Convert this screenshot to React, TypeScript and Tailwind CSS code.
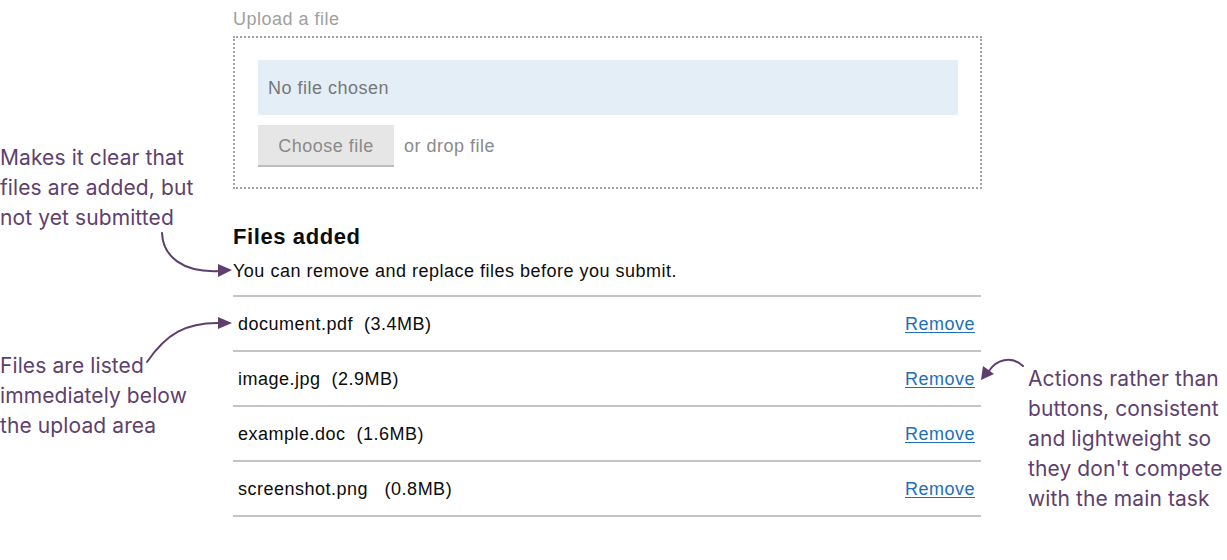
import React from "react";

const files = [
  { name: "document.pdf", size: "(3.4MB)", gap: "  " },
  { name: "image.jpg", size: "(2.9MB)", gap: "  " },
  { name: "example.doc", size: "(1.6MB)", gap: "  " },
  { name: "screenshot.png", size: "(0.8MB)", gap: "   " },
];

export default function App() {
  return (
    <div className="relative w-[1227px] h-[560px] bg-white overflow-hidden flex">
      <div className="w-[233px] shrink-0 text-[#5e3f6e] text-[21px] leading-[30px] tracking-[0.1px] [font-family:Inter,'Noto_Sans',sans-serif]">
        <p className="mt-[143px] whitespace-nowrap">
          Makes it clear that
          <br />
          files are added, but
          <br />
          not yet submitted
        </p>
        <p className="mt-[118px] whitespace-nowrap">
          Files are listed
          <br />
          immediately below
          <br />
          the upload area
        </p>
      </div>

      <div className="w-[749px] shrink-0 pt-[7px] tracking-[0.5px] [font-family:'Liberation_Sans',Arial,sans-serif]">
        <div className="text-[18px] leading-[24px] text-[#a0a0a0]">Upload a file</div>
        <div className="mt-[5px] border-2 border-dotted border-[#a3a3a3] pt-[22px] pb-[20px] pl-[23px] pr-[22px]">
          <div className="h-[55px] bg-[#e3eef7] flex items-center pl-[10px] pt-[2px] text-[18px] text-[#777]">
            No file chosen
          </div>
          <div className="mt-[10px] flex items-center">
            <div className="h-[42px] w-[136px] bg-[#e6e6e6] border-b-2 border-[#bdbdbd] flex items-center justify-center pt-[2px] text-[18px] text-[#8a8a8a]">
              Choose file
            </div>
            <span className="ml-[10px] text-[18px] text-[#8a8a8a]">or drop file</span>
          </div>
        </div>

        <h2 className="mt-[34px] text-[22px] leading-[28px] font-bold tracking-[0.6px] text-[#0b0c0c]">Files added</h2>
        <p className="mt-[8px] text-[18px] leading-[24px] text-[#0b0c0c]">
          You can remove and replace files before you submit.
        </p>
        <ul className="mt-[12px] w-[748px] border-t-2 border-[#c4c4c4]">
          {files.map((f) => (
            <li
              key={f.name}
              className="h-[55px] border-b-2 border-[#c4c4c4] flex items-center justify-between pl-[5px] pr-[6px] pt-[2px]"
            >
              <span className="text-[18px] text-[#0b0c0c] whitespace-pre">
                {f.name}
                {f.gap}
                {f.size}
              </span>
              <a href="#" className="text-[18px] text-[#1d70b8] underline underline-offset-2">
                Remove
              </a>
            </li>
          ))}
        </ul>
      </div>

      <div className="flex-1 pl-[46px] text-[#5e3f6e] text-[21px] leading-[30px] tracking-[0.1px] [font-family:Inter,'Noto_Sans',sans-serif]">
        <p className="mt-[364px] whitespace-nowrap">
          Actions rather than
          <br />
          buttons, consistent
          <br />
          and lightweight so
          <br />
          they don't compete
          <br />
          with the main task
        </p>
      </div>

      <svg className="absolute inset-0 pointer-events-none" width="1227" height="560" viewBox="0 0 1227 560">
        <g stroke="#5e3f6e" strokeWidth="2" fill="none" strokeLinecap="round">
          <path d="M162,233 C163,256 182,273 220,271" />
          <path d="M147,362 C166,334 186,322 221,323" />
          <path d="M1023,366 C1011,355 996,360 989,371" />
        </g>
        <g fill="#5e3f6e">
          <polygon points="232,270 218,264 218,277" />
          <polygon points="232,323 218,317 218,329" />
          <polygon points="981,380 983,366 994,374" />
        </g>
      </svg>
    </div>
  );
}
